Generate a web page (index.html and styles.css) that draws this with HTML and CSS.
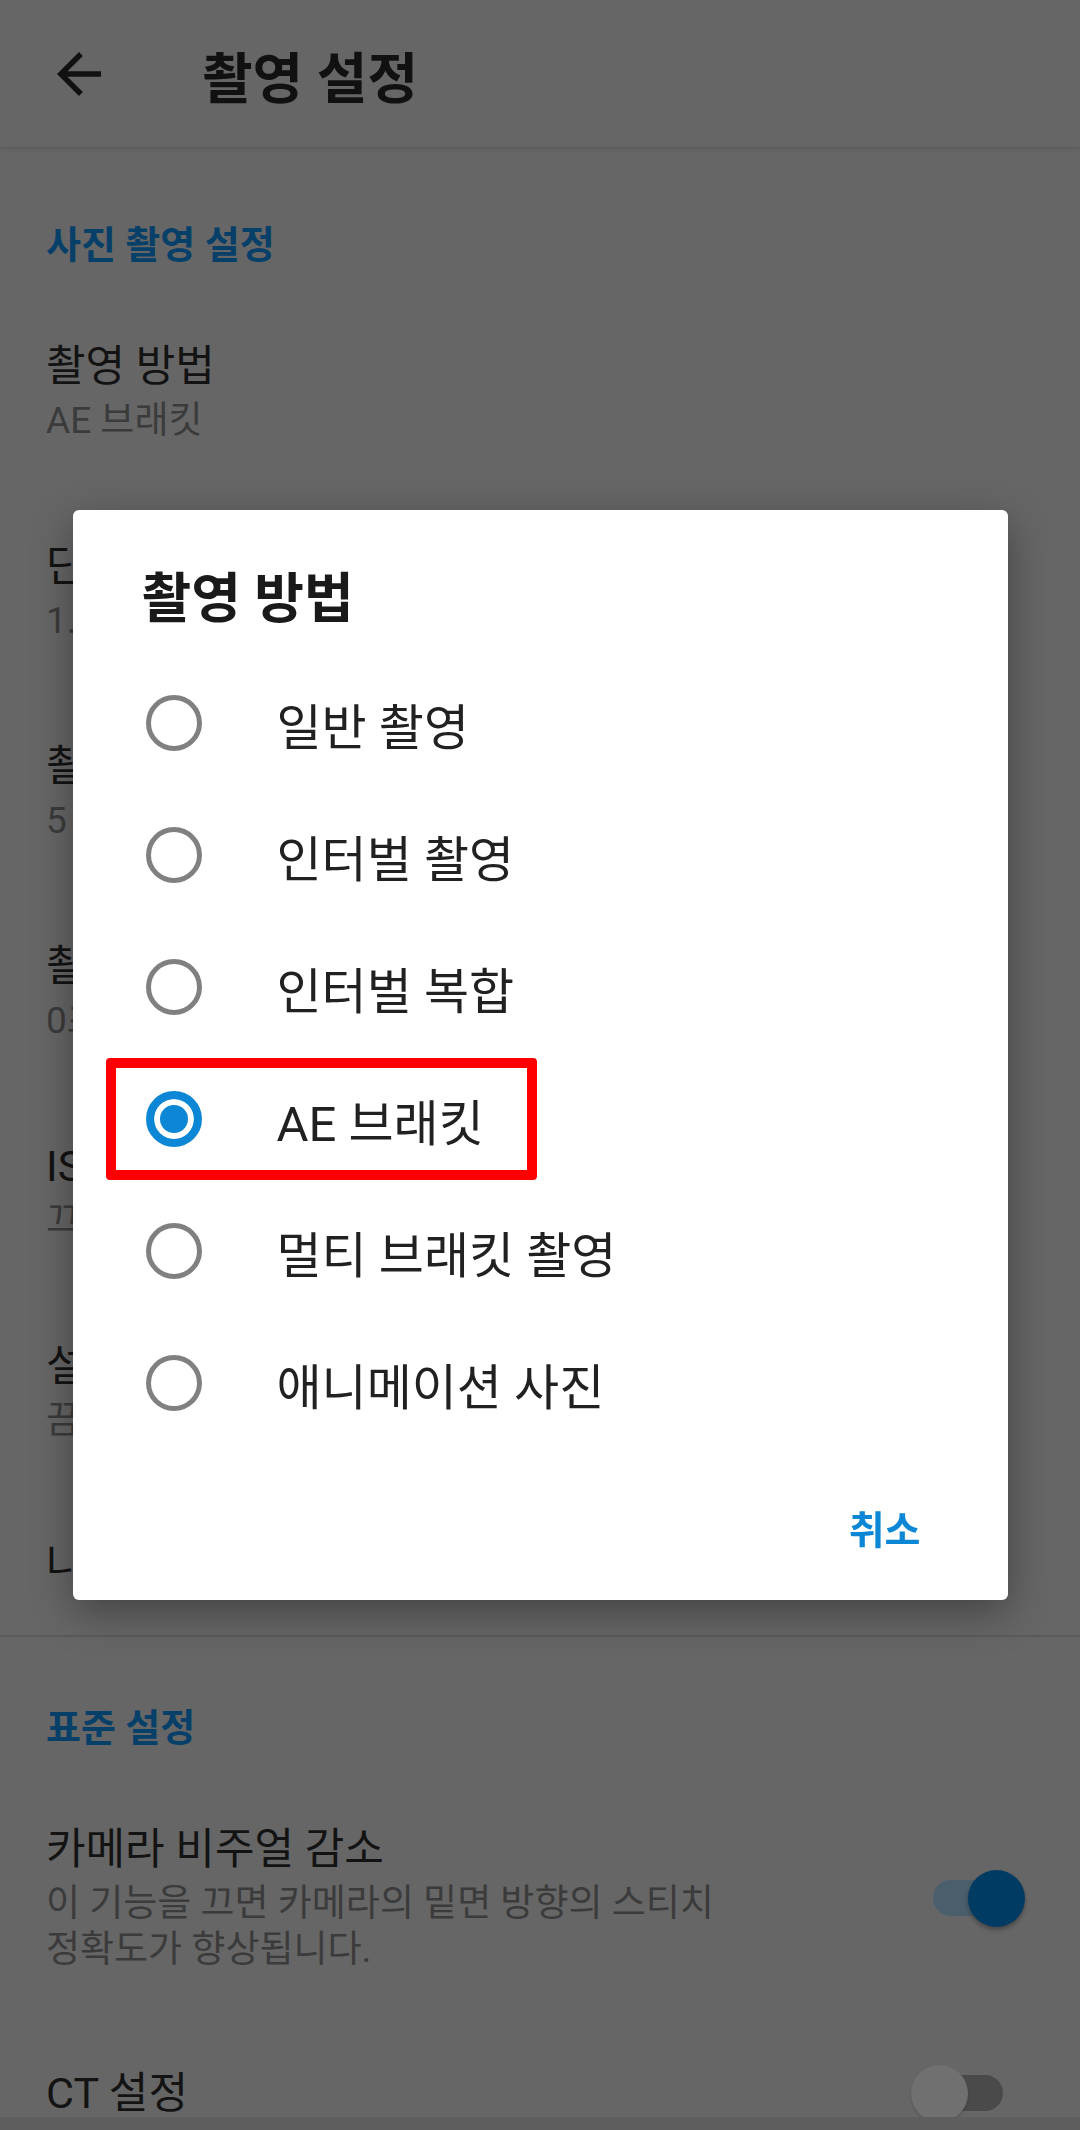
FILE: index.html
```html
<!DOCTYPE html>
<html lang="ko">

<head>
     <meta charset="UTF-8">
     <title>촬영 설정</title>
     <meta name="viewport" content="width=device-width, initial-scale=1.0">
     <link rel="stylesheet" href="styles.css">
</head>

<body>

     <header class="appbar">
          <button class="back" aria-label="뒤로">
               <svg viewBox="0 0 24 24" width="66" height="66">
                    <path d="M20 11H7.83l5.59-5.59L12 4l-8 8 8 8 1.41-1.41L7.83 13H20v-2z" />
               </svg>
          </button>
          <h1>촬영 설정</h1>
     </header>

     <main class="prefs">
          <h2 class="category top">사진 촬영 설정</h2>

          <div class="pref">
               <div class="pref-text">
                    <p class="pref-title">촬영 방법</p>
                    <p class="pref-summary">AE 브래킷</p>
               </div>
          </div>
          <div class="pref">
               <div class="pref-text">
                    <p class="pref-title">단계 간격</p>
                    <p class="pref-summary">1.0 EV</p>
               </div>
          </div>
          <div class="pref">
               <div class="pref-text">
                    <p class="pref-title">촬영 매수</p>
                    <p class="pref-summary">5</p>
               </div>
          </div>
          <div class="pref">
               <div class="pref-text">
                    <p class="pref-title">촬영 지연</p>
                    <p class="pref-summary">0초</p>
               </div>
          </div>
          <div class="pref">
               <div class="pref-text">
                    <p class="pref-title">ISO 감도</p>
                    <p class="pref-summary">끄기</p>
               </div>
          </div>
          <div class="pref">
               <div class="pref-text">
                    <p class="pref-title">설정 저장</p>
                    <p class="pref-summary">끔</p>
               </div>
          </div>
          <div class="pref single">
               <div class="pref-text">
                    <p class="pref-title">나의 설정</p>
               </div>
          </div>

          <div class="divider"></div>

          <h2 class="category">표준 설정</h2>

          <div class="pref">
               <div class="pref-text">
                    <p class="pref-title">카메라 비주얼 감소</p>
                    <p class="pref-summary">이 기능을 끄면 카메라의 밑면 방향의 스티치 정확도가 향상됩니다.</p>
               </div>
               <div class="switch on"><span class="thumb"></span></div>
          </div>
          <div class="pref single">
               <div class="pref-text">
                    <p class="pref-title">CT 설정</p>
               </div>
               <div class="switch off"><span class="thumb"></span></div>
          </div>
     </main>

     <div class="modal">
          <div class="dialog">
               <h3 class="dialog-title">촬영 방법</h3>
               <ul class="options">
                    <li class="option"><span class="radio"></span>일반 촬영</li>
                    <li class="option"><span class="radio"></span>인터벌 촬영</li>
                    <li class="option"><span class="radio"></span>인터벌 복합</li>
                    <li class="option checked"><span class="radio"></span>AE 브래킷<span class="highlight"></span></li>
                    <li class="option"><span class="radio"></span>멀티 브래킷 촬영</li>
                    <li class="option"><span class="radio"></span>애니메이션 사진</li>
               </ul>
               <div class="actions">
                    <button class="text-btn">취소</button>
               </div>
          </div>
     </div>

     <div class="navbar"></div>

</body>

</html>
```

FILE: styles.css
```css
:root {
     --dim-bg: #666666;
     --dim-text: #131313;
     --dim-summary: #3b3b3b;
     --dim-accent: #063f68;
     --accent: #0b87d6;
}

* {
     box-sizing: border-box;
     margin: 0;
     padding: 0;
}

body {
     font-family: Roboto, "Noto Sans CJK KR", sans-serif;
     background-color: var(--dim-bg);
     color: var(--dim-text);
     width: 1080px;
     min-height: 2130px;
     overflow: hidden;
     word-break: keep-all;
}

/* app bar (under the scrim) */
.appbar {
     height: 147px;
     display: flex;
     align-items: center;
     background: var(--dim-bg);
     box-shadow: 0 2px 4px rgba(0, 0, 0, 0.12);
     position: relative;
}

.back {
     margin-left: 46px;
     width: 66px;
     height: 66px;
     border: none;
     background: none;
     fill: #111;
}

.back svg {
     display: block;
}

.appbar h1 {
     margin-left: 90px;
     font-size: 55px;
     font-weight: 700;
     color: #111;
}

/* preference list */
.category {
     padding: 0 46px;
     margin: 69px 0 25px;
     font-size: 38px;
     font-weight: 700;
     line-height: 44px;
     color: var(--dim-accent);
}

.category.top {
     margin-top: 76px;
}

.pref {
     display: flex;
     align-items: center;
     padding: 48px 77px 48px 46px;
}

.pref.single {
     padding-top: 46px;
     padding-bottom: 45px;
}

.pref-text {
     flex: 1;
}

.pref-title {
     font-size: 43px;
     line-height: 52px;
}

.pref-summary {
     margin-top: 6px;
     font-size: 37px;
     line-height: 46px;
     color: var(--dim-summary);
}

.divider {
     height: 2px;
     background: #5a5a5a;
}

.switch {
     position: relative;
     flex-shrink: 0;
     width: 70px;
     height: 36px;
     margin-left: 150px;
     border-radius: 18px;
}

.switch .thumb {
     position: absolute;
     top: -10.5px;
     width: 57px;
     height: 57px;
     border-radius: 50%;
}

.switch.on {
     background: #4b5e6c;
}

.switch.on .thumb {
     right: -22px;
     background: #003b63;
     box-shadow: 0 3px 4px rgba(0, 0, 0, 0.3);
}

.switch.off {
     background: #4a4a4a;
}

.switch.off .thumb {
     left: -22px;
     background: #707070;
     box-shadow: 0 2px 3px rgba(0, 0, 0, 0.15);
}

/* dialog */
.modal {
     position: fixed;
     top: 0;
     left: 0;
     width: 100vw;
     height: 100vh;
     display: flex;
     justify-content: center;
     align-items: center;
     padding-bottom: 20px;
}

.dialog {
     width: 935px;
     background: white;
     border-radius: 6px;
     box-shadow: 0 12px 40px rgba(0, 0, 0, 0.35);
     padding: 60px 0 25px;
}

.dialog-title {
     padding-left: 69px;
     margin-bottom: 27px;
     font-size: 54px;
     font-weight: 700;
     line-height: 60px;
     color: #1a1a1a;
}

.options {
     list-style: none;
}

.option {
     position: relative;
     display: flex;
     align-items: center;
     height: 132px;
     padding-left: 73px;
     font-size: 49px;
     color: #212121;
}

.radio {
     flex-shrink: 0;
     width: 56px;
     height: 56px;
     margin-right: 75px;
     border: 5px solid #808080;
     border-radius: 50%;
}

.option.checked .radio {
     border: 8px solid var(--accent);
     background: var(--accent);
     box-shadow: inset 0 0 0 6px white;
}

.highlight {
     position: absolute;
     left: 33px;
     top: 5px;
     width: 431px;
     height: 122px;
     border: 10px solid #ff0000;
     border-radius: 4px;
}

.actions {
     display: flex;
     justify-content: flex-end;
     margin-top: 30px;
     padding-right: 63px;
}

.text-btn {
     height: 96px;
     padding: 0 24px;
     border: none;
     background: none;
     font-family: inherit;
     font-size: 39px;
     font-weight: 700;
     color: var(--accent);
}

.navbar {
     position: fixed;
     left: 0;
     bottom: 0;
     width: 100vw;
     height: 13px;
     background: #5e5e5e;
}
```
